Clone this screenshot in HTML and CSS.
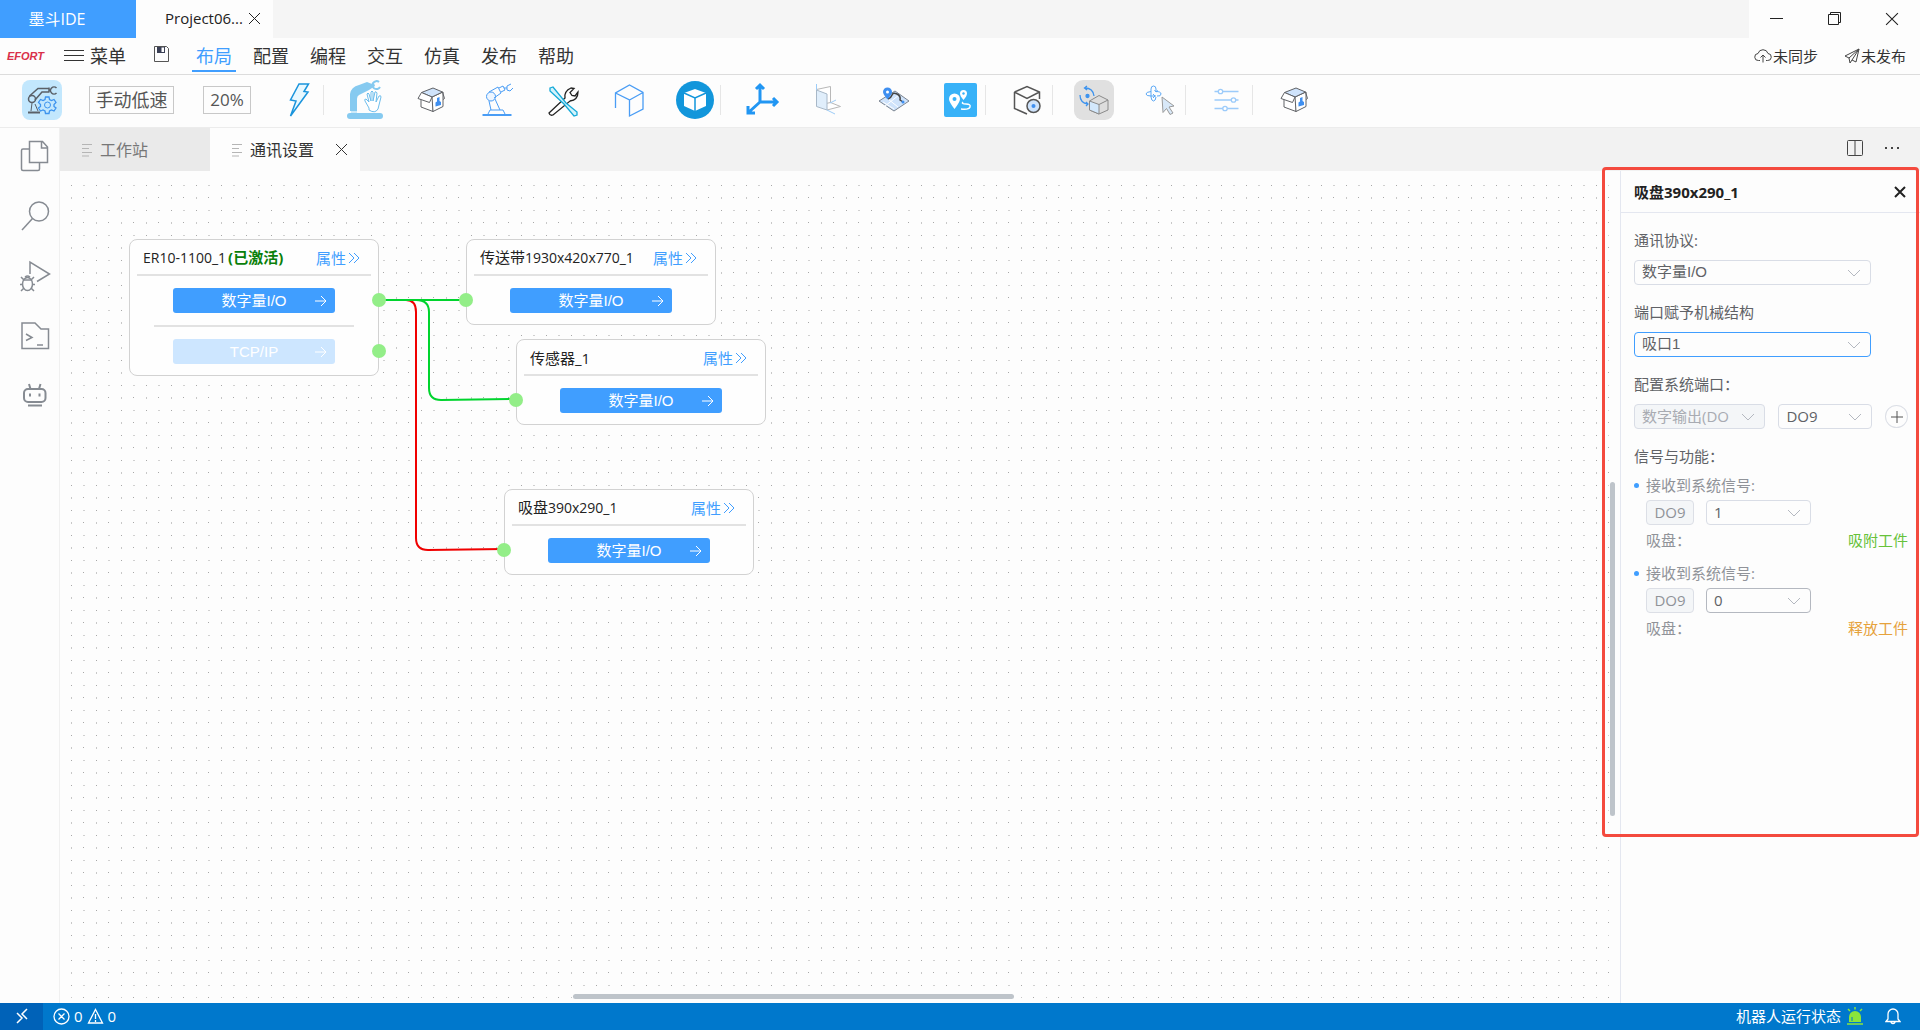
FILE: index.html
```html
<!DOCTYPE html>
<html lang="zh-CN">
<head>
<meta charset="utf-8">
<meta name="viewport" content="width=device-width, initial-scale=1">
<title>墨斗IDE</title>
<link rel="stylesheet" href="styles.css">
</head>
<body>
<svg class="defs" aria-hidden="true">
  <symbol id="chevron" viewBox="0 0 14 14"><path d="M1 4l6 6 6-6" fill="none" stroke="currentColor"/></symbol>
  <symbol id="arrow" viewBox="0 0 12 12"><path d="M0 6h11M6 1l5 5-5 5" fill="none" stroke="currentColor"/></symbol>
  <symbol id="more" viewBox="0 0 12 12"><path d="M1 1l5 5-5 5M6 1l5 5-5 5" fill="none" stroke="currentColor"/></symbol>
  <symbol id="cross" viewBox="0 0 13 13"><path d="M1 1l11 11M12 1L1 12" fill="none" stroke="currentColor"/></symbol>
  <symbol id="lines" viewBox="0 0 12 14"><path d="M1 1.500h10M1 5.500h7M1 9.500h10M1 13h7" fill="none" stroke="currentColor"/></symbol>
  <symbol id="box" viewBox="0 0 40 40" stroke="#606266" stroke-linejoin="round">
    <path d="M10 16v11l12 4.500V16.500z" fill="#fff"/>
    <path d="M21 17l11-5v14.500l-10 5z" fill="#fff"/>
    <path d="M10.500 12.500L22 8l9.500 4L21 17z" fill="#cfe3fb"/>
    <path d="M10.500 12.500L7 18.500l11.500 4L21 17z" fill="#fff"/>
    <path d="M31.500 12l2 6.500-1.500 1" fill="none"/>
    <path d="M24.500 26.500v-4l1.500-1v-3.500l2.500-1v4l1.500 1v3z" fill="#3f8ff0" stroke="none"/>
  </symbol>
</svg>

<header class="titlebar">
  <button class="app-tab" type="button">墨斗IDE</button>
  <div class="project-tab">
    <span>Project06...</span>
    <button class="plain" type="button" aria-label="关闭项目"><svg width="13" height="13"><use href="#cross"/></svg></button>
  </div>
  <div class="window-controls">
    <button class="plain" type="button" aria-label="最小化"><svg width="14" height="14" viewBox="0 0 14 14"><path d="M0 6.500h13" stroke="#222"/></svg></button>
    <button class="plain" type="button" aria-label="还原"><svg width="14" height="14" viewBox="0 0 14 14" fill="none" stroke="#222"><path d="M.5 2.500h10v10H.5zM2.500 2.500v-2h10v10h-2"/></svg></button>
    <button class="plain" type="button" aria-label="关闭"><svg width="14" height="14"><use href="#cross"/></svg></button>
  </div>
</header>

<nav class="menubar">
  <span class="logo">EFORT</span>
  <button class="menu-button" type="button"><svg width="20" height="14" viewBox="0 0 20 14"><path d="M0 1.500h20M0 6.500h20M0 11.500h20" stroke="#333"/></svg>菜单</button>
  <button class="plain save" type="button" aria-label="保存"><svg width="17" height="17" viewBox="0 0 17 17"><path d="M1.500 .5h12l2 2v13h-14z" fill="none" stroke="#555"/><path d="M4 1h8v6H4z" fill="#3a3f55"/><path d="M8.500 1.500H11V6H8.500z" fill="#fff"/></svg></button>
  <div class="menu-items">
    <button class="menu-item active" type="button">布局</button>
    <button class="menu-item" type="button">配置</button>
    <button class="menu-item" type="button">编程</button>
    <button class="menu-item" type="button">交互</button>
    <button class="menu-item" type="button">仿真</button>
    <button class="menu-item" type="button">发布</button>
    <button class="menu-item" type="button">帮助</button>
  </div>
  <div class="sync">
    <button class="sync-item" type="button"><svg width="18" height="14" viewBox="0 0 18 14" fill="none" stroke="#444"><path d="M6 11.500H4.500a3.500 3.500 0 0 1-.5-7 5.200 5.200 0 0 1 10 0 3.500 3.500 0 0 1-.5 7H12M9 13.500V6M6.500 8.500L9 6l2.500 2.500"/></svg>未同步</button>
    <button class="sync-item" type="button"><svg width="16" height="16" viewBox="0 0 16 16" fill="none" stroke="#444"><path d="M15 1L1 8l4 2 1 5 2-3 4 2zM15 1L5 10M15 1L8 12"/></svg>未发布</button>
  </div>
</nav>

<div class="toolbar">
  <button class="tool-box robot" type="button" aria-label="机器人"><svg width="40" height="40" viewBox="0 0 40 40" fill="none">
    <path d="M6 32.500h12" stroke="#5a6068" stroke-width="2"/><path d="M9 31l1-8M16 31l-3-7" stroke="#5a6068"/>
    <circle cx="10" cy="19" r="3.500" stroke="#5a6068" stroke-width="1.500"/><path d="M7.500 16L16 8.500h11M13 20l7-8h7M27 7.500v5M27 10h2M34.500 8a3.500 3.500 0 1 0 0 5" stroke="#5a6068" stroke-width="1.500"/>
    <path d="M23.500 17h3.500l.5 2.500 2 1 2.500-1 2 3-2 2v2l2 1.500-2 3-2.500-1-2 1-.5 2.500h-3.500l-.5-2.500-2-1-2.500 1-2-3 2-1.500v-2l-2-2 2-3 2.500 1 2-1z" stroke="#3d93ee" stroke-width="1.300"/><circle cx="25.500" cy="25" r="3" stroke="#3d93ee"/></svg></button>
  <button class="mode" type="button">手动低速</button>
  <button class="mode speed" type="button">20%</button>
  <div class="tools">
    <button class="tool" type="button" aria-label="使能"><svg width="40" height="40" viewBox="0 0 40 40"><path d="M21 4h9.500L26 11.500l4 .5-17.500 24 5.500-15-5.500-1z" fill="#e8f8ff" stroke="#1a94dc" stroke-width="1.500"/></svg></button>
    <i class="sep"></i>
    <button class="tool" type="button" aria-label="手动拖动"><svg width="40" height="40" viewBox="0 0 40 40"><rect x="2" y="33" width="36" height="6" rx="3" fill="#86caf0"/><path d="M5 31V14Q6 7 14 5l8-3 5 2 2-1 1 3-3 2-3 2-10 5q-2 1-2 4v12z" fill="#86caf0"/><path d="M6 31h6v2H6z" fill="#cdeaf9"/><path d="M34 2a4 4 0 1 0 1 5" fill="none" stroke="#86caf0" stroke-width="2"/><path d="M24 28l-4-7q-1-2 1-2l3 3-2-8q1-2 2 0l2 7V12q1-2 2 0v9l2-9q1-1 2 1l-1 9 3-6q2-1 2 1l-3 12q-3 5-9 1z" fill="#fff" stroke="#6dbdec"/></svg></button>
    <button class="tool" type="button" aria-label="模型库"><svg width="40" height="40"><use href="#box"/></svg></button>
    <button class="tool" type="button" aria-label="机械臂"><svg width="40" height="40" viewBox="0 0 40 40" fill="none" stroke="#4a9df5"><path d="M5.500 35h29" stroke-width="2"/><path d="M11 34l2-4h13l2 4M12 21l2 9M18 19l5 11"/><circle cx="14" cy="16.500" r="4.500" fill="#eef6ff"/><path d="M12 12l9-5 3 6-7 5M22 8l4-2 2 4-4 2M27 8h3M34 4l-4 2v4l3 1 3-3"/></svg></button>
    <button class="tool" type="button" aria-label="工具"><svg width="40" height="40" viewBox="0 0 40 40" fill="#fff" stroke="#222" stroke-width="1.300"><path d="M6 33l16-15q-1-7 6-10l3 .5-4 4 2 3 3 .5 3-4q0 8-8 9L10 35q-3 1-4-2z"/><path d="M7 8l3-1 13 16 11 9v3l-3 1-10-12L7 11z" fill="#d2f3fc" stroke="#14a9d8"/></svg></button>
    <button class="tool" type="button" aria-label="模型"><svg width="40" height="40" viewBox="0 0 40 40" fill="none" stroke="#4a9df5" stroke-width="1.300"><path d="M6.500 28V13L20.500 5 34 12.500v16.500l-13.500 7V20l-14-7M20.500 20L34 12.500"/></svg></button>
    <button class="tool" type="button" aria-label="三维视图"><svg width="40" height="40" viewBox="0 0 40 40"><circle cx="20" cy="20" r="19" fill="#1296db"/><path d="M9 13l11-4 11 4v13l-11 5-11-5z" fill="#fff"/><path d="M9 13l11 5 11-5M20 18v13" fill="none" stroke="#1296db" stroke-width="1.500"/></svg></button>
    <i class="sep"></i>
    <button class="tool" type="button" aria-label="坐标系"><svg width="40" height="40" viewBox="0 0 40 40" fill="none" stroke="#2196f3" stroke-width="3"><path d="M18 22V7M18 22h15M18 22L7 32M14 9l4-4 4 4M31 18l4 4-4 4M6 26v7h7"/></svg></button>
    <button class="tool" type="button" aria-label="平面"><svg width="40" height="40" viewBox="0 0 40 40"><path d="M8.500 9.500l14-3v16l-14 3M19 30l13.500-3.500-10-4" fill="#fff" stroke="#b8b8b8"/><path d="M8.500 10L19 14v16L8.500 26.500z" fill="#e0eefb" stroke="#a8b8c8"/><path d="M8.500 4v6M19 30l8 4M22 23l6-3" stroke="#9cccf8"/></svg></button>
    <button class="tool" type="button" aria-label="地图"><svg width="40" height="40" viewBox="0 0 40 40"><path d="M5 21l16-10 14 10-15 10z" fill="#cfe3fb" stroke="#7b8490"/><path d="M9 22l11 7M11 26l14-11M14 19l10 8" stroke="#fff"/><path d="M14 19q3-1 4-4t5-1 3 6l3 2" fill="none" stroke="#444" stroke-width="1.500"/><path d="M13.500 19.500Q9 14 9 12a4.500 4.500 0 0 1 9 0q0 2-4.500 7.500z" fill="#3f8ff0"/><circle cx="13.500" cy="12" r="1.500" fill="#fff"/><circle cx="29" cy="22" r="1.500" fill="#3f8ff0"/></svg></button>
    <button class="tool" type="button" aria-label="路径"><svg width="40" height="40" viewBox="0 0 40 40"><rect x="4" y="3" width="33" height="34" rx="2" fill="#38b2f8"/><path d="M14.500 29Q9 22 9 19a5.300 5.300 0 0 1 11 0q0 3-5.500 10zM23.500 20Q20 16 20 13.500a3.500 3.500 0 0 1 7 0Q27 16 23.500 20z" fill="#fff"/><circle cx="14.500" cy="19" r="2" fill="#38b2f8"/><circle cx="23.500" cy="13.500" r="1.200" fill="#38b2f8"/><path d="M23 22q-2 2 3 2t4 3-9 2" fill="none" stroke="#fff" stroke-width="1.500"/></svg></button>
    <i class="sep"></i>
    <button class="tool" type="button" aria-label="模型设置"><svg width="40" height="40" viewBox="0 0 40 40" fill="none" stroke="#555" stroke-width="1.500"><path d="M7.500 12L20 6.500 32.500 12v7M7.500 12L20 18.500 32.500 12M7.500 12v16.500L20 34"/><circle cx="26.500" cy="26" r="6.500" fill="#cfe3fb"/><circle cx="26.500" cy="26" r="2" fill="#3f8ff0" stroke="none"/></svg></button>
    <i class="sep"></i>
    <button class="tool" type="button" aria-label="旋转模型"><svg class="pressed" width="40" height="40" viewBox="0 0 40 40" fill="none" stroke="#8a8a8a"><path d="M15.500 21L25 15.500 34 20v10l-9 4-9.500-4z" fill="#ddd"/><path d="M15.500 21L25 24.500V34l-9.500-4z" fill="#d3e8fc"/><path d="M25 24.500l9-4.500"/><g stroke="#3d93ee" stroke-width="1.300"><path d="M6 15q0 8 8 9M11 8q8 0 9 8M13 6l-2.500 2L13 10M12 22l2 2-2 2"/><circle cx="13.500" cy="16" r="1.500" fill="#3d93ee"/></g></svg></button>
    <button class="tool" type="button" aria-label="选择旋转"><svg width="40" height="40" viewBox="0 0 40 40" fill="none" stroke="#5ba8f5"><path d="M11 9q0-3 2.500-3T16 9M16 17q-.5 4-2.500 4T11 17V9M16 9v3M11 11.500q-5 .5-5 2.500t5 2h5M16 11.500q5 0 5 2.500t-4 2M13 14l2 2-2 2M14.500 10l1.500 2 2-1.500"/><path d="M22 17l12 9-5 1 4 6-3 1.500-3.500-6-3.500 4z" fill="#d8e8f8" stroke="#9a9a9a"/></svg></button>
    <i class="sep"></i>
    <button class="tool" type="button" aria-label="参数"><svg width="40" height="40" viewBox="0 0 40 40" fill="#fff" stroke="#9ccbfa" stroke-width="1.300"><path d="M7.500 11.500h24M7.500 20h24M7.500 28.500h24"/><circle cx="13.500" cy="11.500" r="2.200"/><circle cx="26.500" cy="20" r="2.200"/><circle cx="18" cy="28.500" r="2.200"/></svg></button>
    <i class="sep"></i>
    <button class="tool" type="button" aria-label="资源"><svg width="40" height="40"><use href="#box"/></svg></button>
  </div>
</div>

<div class="main">
  <aside class="activity">
    <button class="plain" type="button" aria-label="文件"><svg width="32" height="32" viewBox="0 0 32 32" fill="none" stroke="#868b92" stroke-width="1.500"><path d="M10.500 1.500h13l5 5.500v15.500h-18zM22.500 1.500V8h6M10.500 9H4q-1.500 0-1.500 1.500V29q0 1.500 1.500 1.500h15q1.500 0 1.500-1.500v-6.500"/></svg></button>
    <button class="plain" type="button" aria-label="搜索"><svg width="32" height="32" viewBox="0 0 32 32" fill="none" stroke="#868b92" stroke-width="1.500"><circle cx="20" cy="11.500" r="9.500"/><path d="M13.500 18.500L3 30"/></svg></button>
    <button class="plain" type="button" aria-label="调试"><svg width="32" height="32" viewBox="0 0 32 32" fill="none" stroke="#868b92" stroke-width="1.500"><path d="M11 14V2l19.500 12L18 21.500"/><ellipse cx="8.500" cy="24" rx="5" ry="6.500"/><path d="M4.500 20h8M2 17l3 3M15 17l-3 3M1 24.500h2.500M13.500 24.500H16M2 31l3-3M15 31l-3-3M6 17q2.500-2 5 0"/></svg></button>
    <button class="plain" type="button" aria-label="终端"><svg width="32" height="32" viewBox="0 0 32 32" fill="none" stroke="#868b92" stroke-width="1.500"><path d="M3 3h13l6 6h7.500v19.500H3zM7 14l6 3.500L7 20.500M18 25h6"/></svg></button>
    <button class="plain" type="button" aria-label="助手"><svg width="32" height="32" viewBox="0 0 32 32" fill="none" stroke="#868b92" stroke-width="2"><rect x="5" y="9" width="21.500" height="13" rx="4"/><path d="M10 4l1.500 5M21.500 4L20 9M11 13.500v3M20.500 13.500v3M9 25.500h14"/></svg></button>
  </aside>

  <section class="editor">
    <div class="tabs">
      <button class="tab" type="button"><svg width="12" height="14"><use href="#lines"/></svg>工作站</button>
      <div class="tab current"><svg width="12" height="14"><use href="#lines"/></svg>通讯设置<button class="plain tab-close" type="button" aria-label="关闭标签"><svg width="13" height="13"><use href="#cross"/></svg></button></div>
      <div class="tab-actions">
        <button class="plain" type="button" aria-label="拆分"><svg width="18" height="18" viewBox="0 0 18 18" fill="none" stroke="#444"><rect x="1.500" y="1.500" width="15" height="15" rx="1"/><path d="M9 1.500v15"/></svg></button>
        <button class="plain" type="button" aria-label="更多"><svg width="16" height="4" viewBox="0 0 16 4" fill="#444"><path d="M1 1h2v2H1zM7 1h2v2H7zM13 1h2v2h-2z"/></svg></button>
      </div>
    </div>

    <div class="workspace">
      <div class="canvas">
        <svg class="grid" aria-hidden="true">
          <defs><pattern id="dots" width="25" height="25" patternUnits="userSpaceOnUse">
            <rect x="0" y="1" width="1" height="1" fill="#a8a8a8"/><rect x="12" y="1" width="2" height="1" fill="#d0d0d0"/>
            <rect x="0" y="13" width="1" height="2" fill="#c8c8c8"/><rect x="12" y="13" width="1" height="1" fill="#a8a8a8"/>
          </pattern></defs>
          <rect width="100%" height="100%" fill="url(#dots)"/>
        </svg>
        <svg class="wires" aria-hidden="true" fill="none" stroke-width="2">
          <path d="M319 129h27q10 0 10 12v226q0 12 12 12l76-1" stroke="#f00000"/>
          <path d="M319 129h87M319 129h37q13 0 13 12v76q0 12 12 12l75-1" stroke="#00d42e"/>
        </svg>

        <article class="node n-robot">
          <header><span><span class="model">ER10-1100_1</span><b>(已激活)</b></span><a href="#">属性<svg width="12" height="12"><use href="#more"/></svg></a></header>
          <button class="io" type="button">数字量I/O<svg width="12" height="12"><use href="#arrow"/></svg></button>
          <hr>
          <button class="io" type="button" disabled>TCP/IP<svg width="12" height="12"><use href="#arrow"/></svg></button>
          <i class="port out"></i><i class="port out second"></i>
        </article>
        <article class="node n-belt">
          <header><span>传送带<span class="model">1930x420x770_1</span></span><a href="#">属性<svg width="12" height="12"><use href="#more"/></svg></a></header>
          <button class="io" type="button">数字量I/O<svg width="12" height="12"><use href="#arrow"/></svg></button>
          <i class="port"></i>
        </article>
        <article class="node n-sensor">
          <header><span>传感器_1</span><a href="#">属性<svg width="12" height="12"><use href="#more"/></svg></a></header>
          <button class="io" type="button">数字量I/O<svg width="12" height="12"><use href="#arrow"/></svg></button>
          <i class="port"></i>
        </article>
        <article class="node n-sucker">
          <header><span>吸盘<span class="model">390x290_1</span></span><a href="#">属性<svg width="12" height="12"><use href="#more"/></svg></a></header>
          <button class="io" type="button">数字量I/O<svg width="12" height="12"><use href="#arrow"/></svg></button>
          <i class="port"></i>
        </article>
        <i class="scroll-x"></i>
        <i class="scroll-y"></i>
      </div>

      <aside class="panel">
        <header class="panel-head"><h2>吸盘390x290_1</h2><button class="plain" type="button" aria-label="关闭面板"><svg width="12" height="12" viewBox="0 0 12 12"><path d="M1 1l10 10M11 1L1 11" stroke="#222" stroke-width="2"/></svg></button></header>
        <form class="panel-body">
          <div class="field">
            <label for="protocol">通讯协议:</label>
            <div class="select wide"><select id="protocol"><option>数字量I/O</option></select><svg width="14" height="14"><use href="#chevron"/></svg></div>
          </div>
          <div class="field">
            <label for="mech">端口赋予机械结构</label>
            <div class="select wide focus"><select id="mech"><option>吸口1</option></select><svg width="14" height="14"><use href="#chevron"/></svg></div>
          </div>
          <div class="field">
            <label for="port-type">配置系统端口：</label>
            <div class="row">
              <div class="select type"><select id="port-type" disabled><option>数字输出(DO</option></select><svg width="14" height="14"><use href="#chevron"/></svg></div>
              <div class="select port-no"><select aria-label="端口号"><option>DO9</option></select><svg width="14" height="14"><use href="#chevron"/></svg></div>
              <button class="add" type="button" aria-label="添加端口"><svg width="12" height="12" viewBox="0 0 12 12"><path d="M6 0v12M0 6h12" stroke="#555"/></svg></button>
            </div>
          </div>
          <h3>信号与功能：</h3>
          <ul class="signals">
            <li>
              <label for="signal-on">接收到系统信号:</label>
              <div class="signal-row"><span class="tag">DO9</span><div class="select value"><select id="signal-on"><option>1</option></select><svg width="14" height="14"><use href="#chevron"/></svg></div></div>
              <div class="result"><span>吸盘：</span><span class="attach">吸附工件</span></div>
            </li>
            <li>
              <label for="signal-off">接收到系统信号:</label>
              <div class="signal-row"><span class="tag">DO9</span><div class="select value hover"><select id="signal-off"><option>0</option></select><svg width="14" height="14"><use href="#chevron"/></svg></div></div>
              <div class="result"><span>吸盘：</span><span class="release">释放工件</span></div>
            </li>
          </ul>
        </form>
      </aside>
      <div class="highlight"></div>
    </div>
  </section>
</div>

<footer class="statusbar">
  <button class="plain remote" type="button" aria-label="远程"><svg width="14" height="16" viewBox="0 0 14 16" fill="none" stroke="#fff" stroke-width="1.500"><path d="M2 5l5 5-5 5M12 1L7 6l5 5"/></svg></button>
  <button class="problems" type="button">
    <svg width="17" height="17" viewBox="0 0 17 17" fill="none" stroke="#fff" stroke-width="1.300"><circle cx="8.500" cy="8.500" r="7.500"/><path d="M5.500 5.500l6 6M11.500 5.500l-6 6"/></svg><span>0</span>
    <svg width="17" height="17" viewBox="0 0 17 17" fill="none" stroke="#fff" stroke-width="1.300"><path d="M8.500 1.500l7 13.500h-14zM8.500 6v5M8.500 12v2"/></svg><span>0</span>
  </button>
  <div class="robot-state">机器人运行状态
    <svg width="16" height="18" viewBox="0 0 16 18"><path d="M2 15V10a6 6 0 0 1 12 0v5z" fill="#8be53c"/><path d="M0 17h16M8 0v2.500M1 2l2 2M15 2l-2 2" stroke="#8be53c" stroke-width="1.500"/><path d="M5 14v-4" stroke="#0078cc"/></svg>
  </div>
  <button class="plain bell" type="button" aria-label="通知"><svg width="16" height="18" viewBox="0 0 16 18" fill="none" stroke="#fff" stroke-width="1.300"><path d="M1 14.500l2-2.500V7a5 5 0 0 1 10 0v5l2 2.500zM6 14.500q0 2 2 2t2-2"/></svg></button>
</footer>
</body>
</html>
```

FILE: styles.css
```css
* {
  box-sizing: border-box;
}

body {
  display: flex;
  flex-direction: column;
  min-height: 100vh;
  margin: 0;
  color: #333;
  background: #fdfdfd;
  font: 15px/20px "Open Sans", "Noto Sans CJK SC", sans-serif;
}

button {
  padding: 0;
  border: 0;
  color: inherit;
  background: none;
  font: inherit;
}

svg {
  display: block;
  flex: none;
}

.defs {
  position: absolute;
  width: 0;
  height: 0;
}

.plain {
  display: flex;
  align-items: center;
  justify-content: center;
}

/* Title bar */
.titlebar {
  display: flex;
  height: 38px;
  background: #f5f5f5;
}

.app-tab {
  width: 136px;
  padding-right: 22px;
  color: #fff;
  background: #409eff;
  font-size: 16px;
}

.project-tab {
  display: flex;
  align-items: center;
  gap: 5px;
  width: 137px;
  padding: 0 0 2px 29px;
  color: #222;
  background: #fdfdfd;
}

.window-controls {
  display: flex;
  justify-content: space-between;
  width: 171px;
  margin-left: auto;
  padding: 0 21px;
  color: #222;
  background: #fdfdfd;
}

/* Menu bar */
.menubar {
  display: flex;
  align-items: center;
  height: 37px;
  border-bottom: 1px solid #dcdcdc;
  font-size: 18px;
}

.logo {
  width: 57px;
  padding-left: 7px;
  color: #d9304a;
  font: italic bold 11px/20px "Liberation Sans", sans-serif;
}

.menu-button {
  display: flex;
  align-items: center;
  gap: 6px;
  width: 96px;
  padding-left: 7px;
}

.save {
  padding-bottom: 4px;
}

.menu-items {
  display: flex;
  align-self: stretch;
  gap: 13px;
  margin-left: 22px;
}

.menu-item {
  width: 44px;
  padding-top: 3px;
  border-bottom: 2px solid transparent;
  margin-bottom: 2px;
}

.menu-item.active {
  color: #409eff;
  border-color: #409eff;
}

.sync {
  display: flex;
  gap: 26px;
  margin-left: auto;
  padding-right: 14px;
  font-size: 15px;
}

.sync-item {
  display: flex;
  align-items: center;
  gap: 1px;
}

/* Toolbar */
.toolbar {
  display: flex;
  align-items: center;
  height: 53px;
  padding-left: 22px;
  padding-bottom: 2px;
  border-bottom: 1px solid #ececec;
}

.robot {
  width: 40px;
  border-radius: 8px;
  background: #c2e7fd;
}

.mode {
  width: 85px;
  height: 28px;
  margin-left: 27px;
  border: 1px solid #c8c8c8;
  color: #555;
  font-size: 18px;
  line-height: 26px;
}

.mode.speed {
  width: 48px;
  margin-left: 29px;
  font-size: 17px;
}

.tools {
  display: flex;
  align-items: center;
  margin-left: 22px;
}

.tool {
  display: flex;
  justify-content: center;
  width: 50px;
}

.tool + .tool,
.sep + .tool {
  margin-left: 16px;
}

.sep {
  width: 1px;
  height: 30px;
  background: #e6e6e6;
}

.pressed {
  border-radius: 9px;
  background: #e0e0e0;
}

/* Main area */
.main {
  display: flex;
  flex: 1;
}

.activity {
  display: flex;
  flex-direction: column;
  align-items: center;
  gap: 28px;
  width: 60px;
  padding: 12px 0 0 10px;
  border-right: 1px solid #f0f0f0;
}

.editor {
  display: flex;
  flex: 1;
  flex-direction: column;
  min-width: 0;
}

.tabs {
  display: flex;
  height: 43px;
  background: #f2f2f2;
  font-size: 16px;
}

.tab {
  display: flex;
  align-items: center;
  gap: 7px;
  width: 150px;
  padding-left: 21px;
  color: #777;
  background: #eaeaea;
}

.tab.current {
  color: #333;
  background: #fdfdfd;
}

.tab > svg {
  color: #b5b5b5;
}

.tab-close {
  margin-left: 14px;
}

.tab-actions {
  display: flex;
  align-items: center;
  gap: 20px;
  margin-left: auto;
  padding-right: 20px;
  padding-bottom: 4px;
}

.workspace {
  position: relative;
  display: flex;
  flex: 1;
}

.canvas {
  position: relative;
  flex: 1;
  min-height: 600px;
  overflow: hidden;
}

.grid {
  position: absolute;
  left: 11px;
  top: 13px;
  width: calc(100% - 22px);
  height: calc(100% - 18px);
}

.wires {
  position: absolute;
  inset: 0;
  width: 100%;
  height: 100%;
}

/* Diagram nodes */
.node {
  position: absolute;
  width: 250px;
  padding: 0 7px 11px;
  border: 1px solid #d2d2d2;
  border-radius: 8px;
  background: #fefefe;
}

.n-robot { left: 69px; top: 68px; }
.n-belt { left: 406px; top: 68px; }
.n-sensor { left: 456px; top: 168px; }
.n-sucker { left: 444px; top: 318px; }

.node header {
  display: flex;
  align-items: center;
  justify-content: space-between;
  height: 36px;
  padding: 1px 11px 0 6px;
  border-bottom: 2px solid #e2e2e2;
  color: #222;
}

.model {
  font-size: 14px;
}

.node b {
  margin-left: 2px;
  color: #0a800a;
}

.node a {
  display: flex;
  align-items: center;
  gap: 2px;
  color: #409eff;
  text-decoration: none;
}

.node hr {
  height: 2px;
  margin: 12px 17px 0;
  border: 0;
  background: #e2e2e2;
}

.io {
  display: grid;
  grid-template-columns: 1fr 12px;
  align-items: center;
  width: 162px;
  height: 25px;
  margin: 12px auto 0;
  padding: 0 8px 0 20px;
  border-radius: 3px;
  color: #fff;
  background: #409eff;
  font-family: "Liberation Sans", "Noto Sans CJK SC", sans-serif;
}

.io:disabled {
  background: #cde6ff;
}

.port {
  position: absolute;
  top: 53px;
  left: -8px;
  width: 14px;
  height: 14px;
  border-radius: 50%;
  background: #93ee88;
}

.port.out {
  right: -8px;
  left: auto;
}

.port.second {
  top: 104px;
}

.scroll-x,
.scroll-y {
  position: absolute;
  border-radius: 3px;
  background: #bec4ca;
}

.scroll-x {
  left: 513px;
  bottom: 4px;
  width: 441px;
  height: 5px;
}

.scroll-y {
  top: 311px;
  right: 5px;
  width: 5px;
  height: 334px;
}

/* Properties panel */
.panel {
  width: 300px;
  border-left: 1px solid #e4e7f0;
  color: #606266;
}

.panel-head {
  display: flex;
  align-items: center;
  justify-content: space-between;
  height: 42px;
  padding: 0 14px 0 13px;
  border-bottom: 1px solid #e4e7f0;
  color: #222;
}

.panel-head h2 {
  margin: 0;
  font-size: 15px;
  font-weight: 700;
}

.panel-body {
  padding: 17px 12px 0 13px;
}

.field {
  display: flex;
  flex-direction: column;
  gap: 10px;
  margin-bottom: 17px;
}

.row {
  display: flex;
  align-items: center;
  gap: 13px;
}

.select {
  display: grid;
  grid-template-columns: 1fr 14px 10px;
  align-items: center;
  height: 25px;
  color: #b4b8c0;
}

.select select {
  grid-area: 1 / 1 / 2 / 4;
  width: 100%;
  height: 25px;
  padding: 0 7px 1px;
  border: 1px solid #d9dde6;
  border-radius: 4px;
  color: #606266;
  background: transparent;
  font: inherit;
  line-height: 22px;
  opacity: 1;
  appearance: none;
}

.select svg {
  grid-area: 1 / 2;
  pointer-events: none;
}

.wide {
  width: 237px;
  font-family: "Liberation Sans", "Noto Sans CJK SC", sans-serif;
}

.type {
  width: 132px;
}

.port-no {
  width: 94px;
}

.value {
  width: 105px;
}

.focus select {
  border-color: #409eff;
}

.hover select {
  border-color: #b4b8c0;
}

.select select:disabled {
  color: #a8abb2;
  background: #f4f6f8;
}

.add {
  display: flex;
  align-items: center;
  justify-content: center;
  width: 23px;
  height: 23px;
  border: 1px solid #dcdfe6;
  border-radius: 50%;
}

.panel-body h3 {
  margin: 0;
  font-size: 15px;
  font-weight: 400;
}

.signals {
  margin: 9px 0 0;
  padding: 0;
  list-style: none;
}

.signals li {
  display: grid;
  grid-template-columns: 12px 1fr;
  margin-bottom: 13px;
  color: #909399;
}

.signals li::before {
  content: "";
  align-self: center;
  width: 5px;
  height: 5px;
  border-radius: 50%;
  background: #409eff;
}

.signal-row,
.result {
  display: flex;
  grid-column: 2;
}

.signal-row {
  gap: 12px;
  margin: 5px 0;
}

.result {
  justify-content: space-between;
}

.tag {
  width: 48px;
  height: 25px;
  border: 1px solid #dcdfe6;
  border-radius: 4px;
  background: #f4f6f8;
  line-height: 22px;
  text-align: center;
}

.attach { color: #67c23a; }
.release { color: #e6a23c; }

.highlight {
  position: absolute;
  top: -4px;
  right: 1px;
  width: 317px;
  height: 670px;
  border: 3px solid #f44a3e;
  border-radius: 4px;
  pointer-events: none;
}

/* Status bar */
.statusbar {
  display: flex;
  align-items: center;
  height: 27px;
  padding-bottom: 1px;
  color: #fff;
  background: #0078cc;
}

.remote {
  width: 43px;
  height: 27px;
  background: #0062b8;
}

.problems {
  display: flex;
  align-items: center;
  gap: 4px;
  margin-left: 10px;
}

.robot-state {
  display: flex;
  align-items: center;
  gap: 6px;
  margin-left: auto;
}

.bell {
  margin: 0 19px 0 22px;
}
```
